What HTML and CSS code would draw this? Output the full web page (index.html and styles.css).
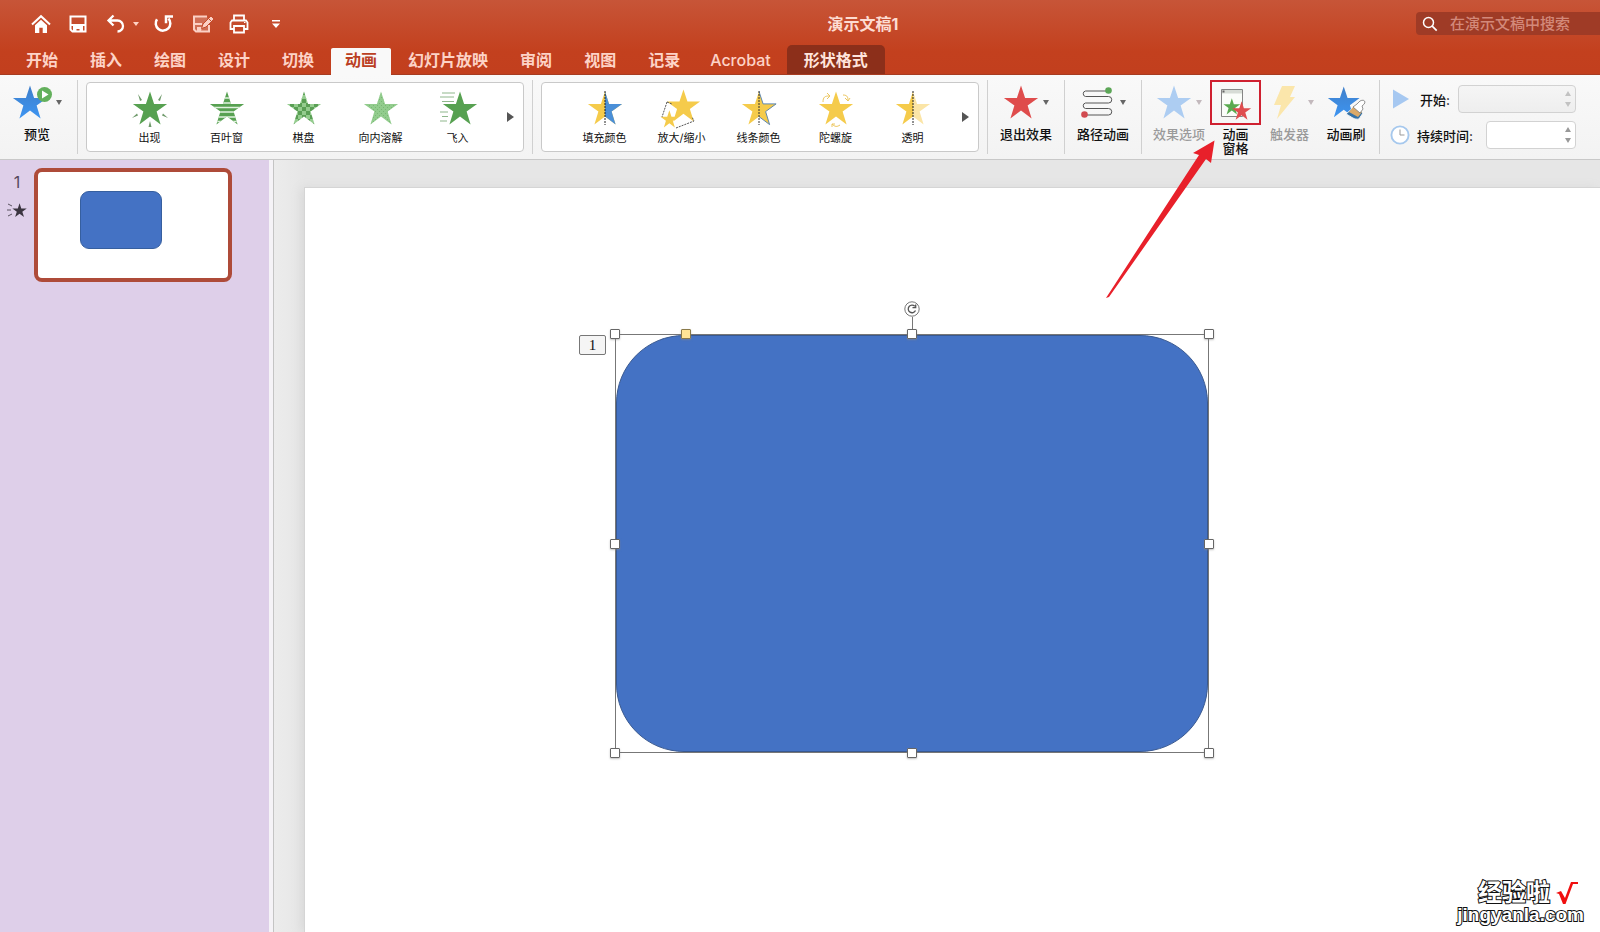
FILE: index.html
```html
<!DOCTYPE html>
<html lang="zh-CN">
<head>
<meta charset="utf-8">
<title>演示文稿1</title>
<link rel="stylesheet" href="styles.css">
</head>
<body>
<svg class="defs" aria-hidden="true">
  <defs>
    <path id="star" d="M18 .5 22.1 12.9H35.1L24.6 20.6 28.6 33.6 18 25.6 7.4 33.6 11.4 20.6.9 12.9H13.9Z"/>
    <clipPath id="star-clip"><use href="#star"/></clipPath>
    <clipPath id="star-left"><path d="M0 0h18v36H0z"/></clipPath>
    <clipPath id="star-right"><path d="M18 0h18v36H18z"/></clipPath>
    <linearGradient id="blue" x1="0" y1="0" x2="0" y2="1"><stop offset="0" stop-color="#3f7fca"/><stop offset="1" stop-color="#3d95f2"/></linearGradient>
    <pattern id="checks" width="8" height="8" patternUnits="userSpaceOnUse"><path d="M0 0h8v8H0z" fill="#94cc8e"/><path d="M0 0h4v4H0zM4 4h4v4H4z" fill="#5a9f55"/></pattern>
    <pattern id="grain" width="4" height="4" patternUnits="userSpaceOnUse"><path d="M0 0h4v4H0z" fill="#92cc8d"/><path d="M0 0h1v1H0zM2 2h1v1H2z" fill="#79b874"/></pattern>
  </defs>
</svg>
<div class="app">
  <header class="header">
    <div class="titlebar">
      <div class="quick">
        <button aria-label="主页"><svg width="20" height="20" viewBox="0 0 20 20"><path d="M1 10.500 10 2.200l9 8.300" fill="none" stroke="#fff" stroke-width="2"/><path d="M4 11.200 10 5.700l6 5.500V19h-4.300v-5.300H8.300V19H4z" fill="#fff"/></svg></button>
        <button aria-label="保存"><svg width="20" height="20" viewBox="0 0 20 20"><path d="M2.500 2.500h15v15h-13l-2-2z" fill="none" stroke="#fff" stroke-width="2"/><path d="M2 10h16v2H2zM5 12h10v6h-3.500v-3H8.500v3H5z" fill="#fff"/></svg></button>
        <button class="undo" aria-label="撤销"><svg width="20" height="20" viewBox="0 0 20 20"><path d="M7.500 1.500 2.500 6.500l5 5M3 6.500h8.500a5.500 5.500 0 0 1 0 11" fill="none" stroke="#fff" stroke-width="2.300"/></svg></button>
        <button class="caret-btn" aria-label="撤销列表"><svg width="6" height="4" viewBox="0 0 6 4"><path d="M0 0h6L3 4z" fill="#ffd2c4"/></svg></button>
        <button aria-label="重做"><svg width="20" height="20" viewBox="0 0 20 20"><path d="M3 5.200A7.300 7.300 0 1 0 14.500 4.500M19 2.500h-7v6.800" fill="none" stroke="#fff" stroke-width="2.500"/></svg></button>
        <button aria-label="另存为"><svg width="24" height="20" viewBox="0 0 24 20"><path d="M18 11v6.500H5l-2-2v-13h13" fill="#ffffff33" stroke="#fbd0c4" stroke-width="2"/><path d="M6 13h5l-1 4H6zM3 9h8v2H3z" fill="#fbd0c4"/><path d="M10.500 14.500 12 10l8-8 3 3-8 8z" fill="#fbd0c4" stroke="#c64b2b"/><path d="m17.500 4.500 3 3" stroke="#c64b2b"/></svg></button>
        <button class="print" aria-label="打印"><svg width="20" height="20" viewBox="0 0 20 20"><path d="M5 6V1.500h10V6M5 15H1.500V8.500L3 6.500h14l1.500 2V15H15M5 12h10v6.500H5z" fill="none" stroke="#fff" stroke-width="1.800"/><path d="M15 8.500h1.500" stroke="#fff"/></svg></button>
        <button aria-label="自定义"><svg width="10" height="10" viewBox="0 0 10 10"><path d="M1 1h8v1.500H1zM1 4.500h8L5 9z" fill="#fff"/></svg></button>
      </div>
      <h1 class="doc-title">演示文稿1</h1>
      <label class="search"><svg width="16" height="16" viewBox="0 0 16 16"><circle cx="6.500" cy="6.500" r="5" fill="none" stroke="#fff" stroke-width="1.500"/><path d="m10.200 10.200 4.500 4.500" stroke="#fff" stroke-width="1.700"/></svg><input type="text" placeholder="在演示文稿中搜索" aria-label="在演示文稿中搜索"></label>
    </div>
    <nav class="tabs">
      <button>开始</button><button>插入</button><button>绘图</button><button>设计</button><button>切换</button><button class="active">动画</button><button>幻灯片放映</button><button>审阅</button><button>视图</button><button>记录</button><button class="latin">Acrobat</button><button class="context">形状格式</button>
    </nav>
  </header>

  <section class="ribbon">
    <div class="group preview">
      <button class="tool"><span class="tool-icon"><svg width="40" height="36" viewBox="0 0 40 36"><use href="#star" fill="url(#blue)"/><circle cx="32.500" cy="9.500" r="7.500" fill="#63b05c"/><path d="M30 5.500v8l6.500-4z" fill="#fff"/></svg><svg class="caret" width="6" height="5" viewBox="0 0 6 5"><path d="M0 0h6L3 5z"/></svg></span><span>预览</span></button>
    </div>
    <div class="group">
      <div class="gallery">
        <button class="effect"><svg width="36" height="36" viewBox="0 0 36 36"><use href="#star" fill="#57a151"/><g fill="#6f9a6b"><path d="m6 3 4 6-2 1zM30 3l-4 6 2 1zM0 27l6-2.500L5 22.500zM36 27l-6-2.500 1-2zM16.500 36l1.500-6 1.500 6z"/></g></svg><span>出现</span></button>
        <button class="effect"><svg width="36" height="36" viewBox="0 0 36 36"><use href="#star" fill="#57a151"/><path clip-path="url(#star-clip)" d="M0 7h36M0 12h36M0 16.500h36M0 21h36M0 26h36M0 30.500h36" stroke="#e1f2df" stroke-width="1.500"/></svg><span>百叶窗</span></button>
        <button class="effect"><svg width="36" height="36" viewBox="0 0 36 36"><use href="#star" fill="url(#checks)"/></svg><span>棋盘</span></button>
        <button class="effect"><svg width="36" height="36" viewBox="0 0 36 36"><use href="#star" fill="url(#grain)"/></svg><span>向内溶解</span></button>
        <button class="effect"><svg class="over" width="36" height="36" viewBox="0 0 36 36"><use href="#star" x="2" fill="#57a151"/><path d="M2 2h13M0 6h14M2 10.500h12M0 21h8M2 25.500h6M0 30h7" stroke="#8fb78c"/></svg><span>飞入</span></button>
        <button class="more" aria-label="更多"><svg width="8" height="10" viewBox="0 0 8 10"><path d="M0 0v10l7-5z" fill="#555"/></svg></button>
      </div>
    </div>
    <div class="group">
      <div class="gallery">
        <button class="effect"><svg width="36" height="36" viewBox="0 0 36 36"><use href="#star" fill="#f5cb4b"/><use href="#star" fill="#4a8fd8" clip-path="url(#star-right)"/><path d="M18 0v34" stroke="#222" stroke-dasharray="2 1"/></svg><span>填充颜色</span></button>
        <button class="effect"><svg class="over" width="36" height="36" viewBox="0 0 36 36"><use href="#star" transform="translate(2 -2) scale(.97)" fill="#f5cb4b"/><use href="#star" transform="translate(-4 19) scale(.52)" fill="#f5cb4b"/><path d="m3 11-5 15M12 37l18-7-2-4M3 11l5 2" fill="none" stroke="#555" stroke-dasharray="2 1"/></svg><span>放大/缩小</span></button>
        <button class="effect"><svg width="36" height="36" viewBox="0 0 36 36"><use href="#star" fill="#f5cb4b"/><use href="#star" fill="none" stroke="#5f87ae" clip-path="url(#star-right)"/><path d="M18 0v34" stroke="#333" stroke-dasharray="2 1"/></svg><span>线条颜色</span></button>
        <button class="effect"><svg width="36" height="36" viewBox="0 0 36 36"><use href="#star" fill="#f5cb4b"/><path d="M5 11c0-5 2-6 6-6M9 2l3 3-3 3M25 4c5 0 5 3 5 6M27 7l3 3 2-3M22 34c-3 2-5 2-8-1M14 36v-3h3" fill="none" stroke="#ecc65e"/></svg><span>陀螺旋</span></button>
        <button class="effect"><svg width="36" height="36" viewBox="0 0 36 36"><use href="#star" fill="#f5cb4b" clip-path="url(#star-left)"/><use href="#star" fill="#fbe5a7" clip-path="url(#star-right)"/><path d="M18 0v34" stroke="#222" stroke-dasharray="2 1"/></svg><span>透明</span></button>
        <button class="more" aria-label="更多"><svg width="8" height="10" viewBox="0 0 8 10"><path d="M0 0v10l7-5z" fill="#555"/></svg></button>
      </div>
    </div>
    <div class="group single">
      <button class="tool"><span class="tool-icon"><svg width="36" height="36" viewBox="0 0 36 36"><use href="#star" fill="#df4c4c"/></svg><svg class="caret" width="6" height="5" viewBox="0 0 6 5"><path d="M0 0h6L3 5z"/></svg></span><span>退出效果</span></button>
    </div>
    <div class="group single">
      <button class="tool"><span class="tool-icon path-icon"><svg width="34" height="36" viewBox="0 0 34 36"><path d="M28 6H5.500a2.800 2.800 0 0 0 0 5.500h23a3.200 3.200 0 0 1 0 6.500h-23a2.800 2.800 0 0 0 0 5.500h23a3.200 3.200 0 0 1 0 6.500H5" fill="none" stroke="#555"/><circle cx="28.500" cy="5.500" r="3.300" fill="#5ca657"/><circle cx="4.500" cy="29.500" r="3.300" fill="#d14b50"/></svg><svg class="caret" width="6" height="5" viewBox="0 0 6 5"><path d="M0 0h6L3 5z"/></svg></span><span>路径动画</span></button>
    </div>
    <div class="group tools">
      <button class="tool" disabled><span class="tool-icon"><svg width="36" height="36" viewBox="0 0 36 36"><use href="#star" fill="#adcdf2"/></svg><svg class="caret" width="6" height="5" viewBox="0 0 6 5"><path d="M0 0h6L3 5z"/></svg></span><span>效果选项</span></button>
      <button class="tool"><span class="tool-icon marked"><svg width="36" height="34" viewBox="0 0 36 34"><path d="M3.500 3.500h21v27h-21z" fill="#fbfdfa" stroke="#858585"/><path d="M4 4h20v3.500H4z" fill="#d7dcd6"/><path d="M4.500 4.500h2v2h-2z" fill="#666"/><use href="#star" transform="translate(5 12) scale(.49)" fill="#5aaa50"/><use href="#star" transform="translate(13.500 15) scale(.56)" fill="#df4c4f"/></svg></span><span>动画<br>窗格</span></button>
      <button class="tool trigger" disabled><span class="tool-icon"><svg width="26" height="36" viewBox="0 0 26 36"><path d="M12 1h13l-5 11h5L7 34l4-14H4z" fill="#fbe6ab"/></svg><svg class="caret" width="6" height="5" viewBox="0 0 6 5"><path d="M0 0h6L3 5z"/></svg></span><span>触发器</span></button>
      <button class="tool"><span class="tool-icon"><svg width="40" height="36" viewBox="0 0 40 36"><use href="#star" transform="translate(1 1) scale(.93)" fill="url(#blue)"/><path d="m20 29 9-8 8 7-4 6c-5 1-7-2-13-5z" fill="#3472a8" stroke="#f5f5f5"/><path d="m23 27 5-6 8 6-4 5z" fill="#dba968"/><path d="m27 22 4-3 3-3q4-2 5 1 0 2-3 4l1 3-3 4z" fill="#fff" stroke="#777" stroke-width=".8"/></svg></span><span>动画刷</span></button>
    </div>
    <div class="timing">
      <div class="row"><svg width="20" height="20" viewBox="0 0 20 20"><path d="M3 .5 19 10 3 19.500z" fill="#a6c8f1"/></svg><label class="start-label" for="start">开始:</label>
        <span class="field wide"><select id="start" disabled><option></option></select><svg class="steps light" width="8" height="16" viewBox="0 0 8 16"><path d="M4 0l3 5H1zM4 16l3-5H1z"/></svg></span></div>
      <div class="row"><svg width="20" height="20" viewBox="0 0 20 20"><circle cx="10" cy="10" r="8.600" fill="#fff" stroke="#a6c8ed" stroke-width="1.900"/><path d="M10 4.500V10h4.500" fill="none" stroke="#999"/></svg><label for="duration">持续时间:</label>
        <span class="field"><input id="duration" type="text"><svg class="steps" width="8" height="16" viewBox="0 0 8 16"><path d="M4 0l3 5H1zM4 16l3-5H1z"/></svg></span></div>
    </div>
  </section>

  <main class="workspace">
    <aside class="slides">
      <div class="slide-info"><span>1</span><svg width="20" height="16" viewBox="0 0 20 16"><use href="#star" transform="translate(5 1) scale(.42)" fill="#3b3540"/><path d="m1 2 4 2M0 8h4M1 14l4-2" stroke="#5a5360"/></svg></div>
      <button class="thumb" aria-label="幻灯片 1"><span class="thumb-shape"></span></button>
    </aside>
    <div class="splitter"></div>
    <div class="canvas">
      <div class="slide">
        <button class="order">1</button>
        <div class="selection">
          <div class="shape"></div>
          <i class="stem"></i>
          <svg class="rotate" width="16" height="16" viewBox="0 0 16 16"><circle cx="8" cy="8" r="7.200" fill="#fff" stroke="#777"/><path d="M11.500 9.500A3.800 3.800 0 1 1 10.800 5.300M11.700 3.500v3.200H8.500" fill="none" stroke="#555" stroke-width="1.300"/></svg>
          <i class="handle top left"></i><i class="handle top center"></i><i class="handle top right"></i>
          <i class="handle middle left"></i><i class="handle middle right"></i>
          <i class="handle bottom left"></i><i class="handle bottom center"></i><i class="handle bottom right"></i>
          <i class="handle top adjust"></i>
        </div>
      </div>
    </div>
  </main>
  <svg class="arrow" width="110" height="160" viewBox="0 0 110 160"><path d="M109.500 1.500 88 14l6 2L1 159l3-1 97-138 5 4z" fill="#e8202a"/></svg>
  <div class="watermark">
    <div class="brand"><span>经验啦</span><svg width="24" height="24" viewBox="0 0 24 24"><path d="m1 12 5-2 4 7L16 1h7v2h-5L10.500 23H8L4 13z" fill="#f00f0f"/></svg></div>
    <div class="site">jingyanla.com</div>
  </div>
</div>
</body>
</html>
```

FILE: styles.css
```css
* { box-sizing: border-box; }
body { margin: 0; font-family: Inter, "Noto Sans CJK SC", sans-serif; font-size: 13px; color: #111; }
button { border: 0; margin: 0; padding: 0; background: none; font: inherit; color: inherit; }
svg { display: block; flex: none; }
.defs { position: absolute; width: 0; height: 0; }
.app { position: relative; display: flex; flex-direction: column; min-height: 100vh; overflow: hidden; }

.header { background: linear-gradient(#c75538, #c3401e 70%, #c23f1e); border-bottom: 1px solid #a63c22; }
.titlebar { display: grid; grid-template-columns: 1fr auto; align-items: center; height: 45px; padding-top: 2px; }
.titlebar > * { grid-row: 1; }
.quick { grid-column: 1; display: flex; align-items: center; padding-left: 31px; gap: 17px; }
.quick .undo { margin-left: 1px; }
.quick .caret-btn { margin: 0 -2px 0 -10px; }
.quick .print { margin-left: -3px; }
.quick button:last-child { margin-left: 5px; }
.doc-title { grid-column: 1 / 3; justify-self: center; margin: 0; padding-left: 126px; font-size: 16px; line-height: 24px; font-weight: 700; color: #fddcd2; }
.search { grid-column: 2; display: flex; align-items: center; gap: 12px; width: 184px; height: 23px; padding-left: 6px; border-radius: 4px 0 0 4px; background: #9f3b26; }
.search input { width: 100%; min-width: 0; padding: 0; border: 0; outline: 0; background: none; font: inherit; font-size: 15px; font-weight: 500; color: #fff; }
.search input::placeholder { color: #d3897a; opacity: 1; }

.tabs { display: flex; align-items: flex-end; height: 29px; padding-left: 10px; font-size: 16px; line-height: 24px; font-weight: 700; color: #fdd3c7; }
.tabs button { height: 29px; padding: 0 16px; white-space: nowrap; }
.tabs .latin { padding: 0 16px 0 14px; font-weight: 500; }
.tabs .active { height: 26px; margin: 0 1px; padding: 0 14px 3px; border-radius: 2px 2px 0 0; background: #f9f9f9; color: #bb4023; box-shadow: 0 1px #f9f9f9; }
.tabs .context { padding: 0 17px; border-radius: 5px 5px 0 0; background: #8c2f1a; color: #ffe4dc; }

.ribbon { display: flex; height: 85px; padding: 5px 0; background: linear-gradient(#f9f9f9, #f3f3f3); border-bottom: 1px solid #c8c8c8; }
.group { display: flex; flex: none; align-items: flex-start; height: 74px; padding: 0 8px; border-right: 1px solid #d0d0d0; }
.group.preview { width: 78px; padding: 0 0 0 12px; }
.group.single { width: 77px; padding: 0; justify-content: center; }
.group.tools { width: 238px; padding-left: 11px; }
.gallery { display: flex; width: 438px; height: 70px; margin-top: 2px; padding-left: 24px; border: 1px solid #c9c9c9; border-radius: 4px; background: #fff; }
.effect { display: flex; flex-direction: column; align-items: center; width: 77px; padding-top: 8px; font-size: 11px; line-height: 14px; gap: 4px; white-space: nowrap; }
.over { overflow: visible; }
.more { display: flex; flex: 1; align-items: center; justify-content: center; padding-left: 3px; }
.tool { display: flex; flex-direction: column; align-items: center; line-height: 14px; font-weight: 500; white-space: nowrap; }
.tool:disabled { color: #9a9a9a; }
.tool:disabled .caret { fill: #c3b9bd; }
.tool-icon { display: flex; align-items: center; gap: 4px; height: 45px; margin-bottom: 2px; }
.caret { fill: #666; }
.tool-icon.path-icon { gap: 6px; }
.marked { width: 51px; justify-content: center; border: 2px solid #cf2030; }
.tools .tool + .tool { margin-left: 5px; }
.tools .trigger.trigger { align-items: flex-start; margin: 0 7px 0 9px; }
.trigger .tool-icon { gap: 12px; }

.timing { display: grid; align-content: start; gap: 8px; width: 186px; margin-left: 10px; padding-top: 5px; font-weight: 500; }
.row { display: flex; align-items: center; height: 28px; gap: 7px; }
.start-label { padding-left: 3px; }
.field { position: relative; width: 90px; height: 28px; margin-left: auto; }
.field.wide { width: 118px; }
.field select, .field input { appearance: none; width: 100%; height: 28px; border: 1px solid #d2d2d2; border-radius: 4px; background: #fff; }
.field select { background: linear-gradient(#f5f5f5, #eee); opacity: 1; }
.steps { position: absolute; top: 6px; right: 4px; fill: #999; }
.steps.light { fill: #c2c2c2; }

.workspace { display: flex; flex: 1; }
.slides { display: flex; align-items: flex-start; width: 269px; padding: 8px 0 0 7px; background: #decfe9; }
.slide-info { display: flex; flex-direction: column; align-items: center; width: 20px; margin-right: 7px; padding-top: 4px; font-size: 16px; line-height: 20px; color: #55495e; gap: 10px; }
.thumb { display: flex; align-items: flex-start; width: 198px; height: 114px; padding: 19px 0 0 42px; border: 4px solid #ae4b39; border-radius: 8px; background: #fff; }
.thumb-shape { width: 82px; height: 58px; border: 1px solid #365f9f; border-radius: 9px; background: #4472c4; }
.splitter { width: 5px; border-right: 1px solid #c4c4c4; background: #f5f3f7; }
.canvas { display: flex; flex: 1; padding: 28px 0 0 31px; background: linear-gradient(90deg, #ececec, #e6e6e6 31px); }
.slide { position: relative; flex: 1; background: #fff; box-shadow: 0 0 0 1px #d5d5d5, -4px 0 10px #d8d8d8; }
.order { position: absolute; left: 274px; top: 147px; width: 27px; height: 20px; border: 1px solid #777; border-radius: 2px; background: #f5f5f5; font: 15px/18px "Liberation Serif", serif; }
.selection { position: absolute; left: 310px; top: 146px; width: 594px; height: 419px; border: 1px solid #777; }
.shape { height: 100%; border: 1px solid #38588f; border-radius: 68px; background: #4472c4; }
.stem { position: absolute; left: 50%; top: -18px; height: 18px; border-left: 1px solid #777; }
.rotate { position: absolute; left: calc(50% - 8px); top: -34px; }
.handle { position: absolute; width: 10px; height: 10px; border: 1px solid #666; border-radius: 1px; background: #fff; box-shadow: 0 1px 2px #8888; }
.top { top: -6px; }
.middle { top: calc(50% - 5px); }
.bottom { bottom: -6px; }
.left { left: -6px; }
.center { left: calc(50% - 5px); }
.right { right: -6px; }
.adjust { left: 65px; background: #ffe596; border-color: #8a7a4a; }

.arrow { position: absolute; left: 1105px; top: 139px; }
.watermark { position: absolute; right: 16px; bottom: 7px; color: #fff; font-weight: 700; -webkit-text-stroke: 2px #111; paint-order: stroke fill; }
.brand { display: flex; justify-content: flex-end; align-items: center; gap: 5px; margin-right: 5px; font-size: 24px; line-height: 24px; }
.site { font: 700 19px/20px "Liberation Sans", sans-serif; }
```
